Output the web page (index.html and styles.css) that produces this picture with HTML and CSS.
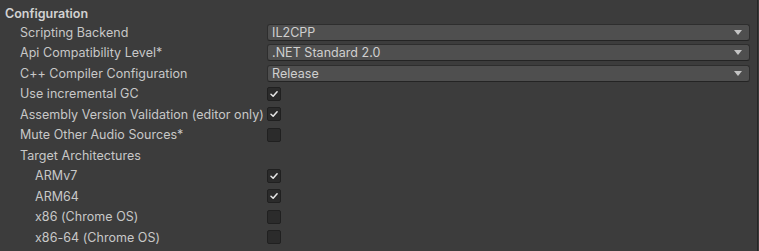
FILE: index.html
```html
<!DOCTYPE html>
<html>
<head>
<meta charset="utf-8">
<link rel="stylesheet" href="styles.css">
</head>
<body>
<div class="panel">
  <div class="header">Configuration</div>
  <div class="row"><span class="label">Scripting Backend</span><div class="dropdown"><span>IL2CPP</span><span class="arrow"></span></div></div>
  <div class="row"><span class="label">Api Compatibility Level*</span><div class="dropdown"><span>.NET Standard 2.0</span><span class="arrow"></span></div></div>
  <div class="row"><span class="label">C++ Compiler Configuration</span><div class="dropdown"><span>Release</span><span class="arrow"></span></div></div>
  <div class="row"><span class="label">Use incremental GC</span><span class="check on"><svg viewBox="0 0 14 14"><path d="M3.5 7.3 L6 9.6 L10.6 4.4" /></svg></span></div>
  <div class="row"><span class="label">Assembly Version Validation (editor only)</span><span class="check on"><svg viewBox="0 0 14 14"><path d="M3.5 7.3 L6 9.6 L10.6 4.4" /></svg></span></div>
  <div class="row"><span class="label">Mute Other Audio Sources*</span><span class="check"></span></div>
  <div class="row"><span class="label">Target Architectures</span></div>
  <div class="row sub"><span class="label">ARMv7</span><span class="check on"><svg viewBox="0 0 14 14"><path d="M3.5 7.3 L6 9.6 L10.6 4.4" /></svg></span></div>
  <div class="row sub"><span class="label">ARM64</span><span class="check on"><svg viewBox="0 0 14 14"><path d="M3.5 7.3 L6 9.6 L10.6 4.4" /></svg></span></div>
  <div class="row sub"><span class="label">x86 (Chrome OS)</span><span class="check"></span></div>
  <div class="row sub"><span class="label">x86-64 (Chrome OS)</span><span class="check"></span></div>
</div>
</body>
</html>
```

FILE: styles.css
```css
html, body {
  margin: 0;
  padding: 0;
  background: #3c3c3c;
  width: 759px;
  height: 251px;
  overflow: hidden;
}
.panel {
  width: 757px;
  height: 251px;
  border-right: 1px solid #262626;
  box-sizing: content-box;
  padding-top: 4px;
  font-family: Inter, "Noto Sans", sans-serif;
  font-size: 12.5px;
  letter-spacing: 0.04px;
  color: #c8c8c8;
}
.header {
  height: 18px;
  display: flex;
  align-items: center;
  padding-left: 5px;
  font-weight: 600;
  letter-spacing: 0;
  color: #d2d2d2;
}
.row {
  height: 20.5px;
  display: flex;
  align-items: center;
  padding-left: 20px;
}
.row.sub {
  padding-left: 35px;
}
.label {
  width: 247px;
  flex: none;
  white-space: nowrap;
}
.row.sub .label {
  width: 232px;
}
.dropdown {
  flex: none;
  width: 483px;
  height: 17px;
  box-sizing: border-box;
  background: #4f4f4f;
  border: 1px solid #2e2e2e;
  border-bottom-color: #242424;
  border-radius: 3px;
  display: flex;
  align-items: center;
  justify-content: space-between;
  padding: 0 7px 0 4px;
  color: #d0d0d0;
}
.arrow {
  width: 0;
  height: 0;
  border-left: 4px solid transparent;
  border-right: 4px solid transparent;
  border-top: 5px solid #c4c4c4;
}
.check {
  flex: none;
  width: 14px;
  height: 14px;
  box-sizing: border-box;
  background: #2b2b2b;
  border: 1px solid #202020;
  border-radius: 2px;
  display: flex;
}
.check svg {
  width: 12px;
  height: 12px;
}
.check path {
  fill: none;
  stroke: #e6e6e6;
  stroke-width: 1.8;
  stroke-linecap: round;
  stroke-linejoin: round;
}
```
